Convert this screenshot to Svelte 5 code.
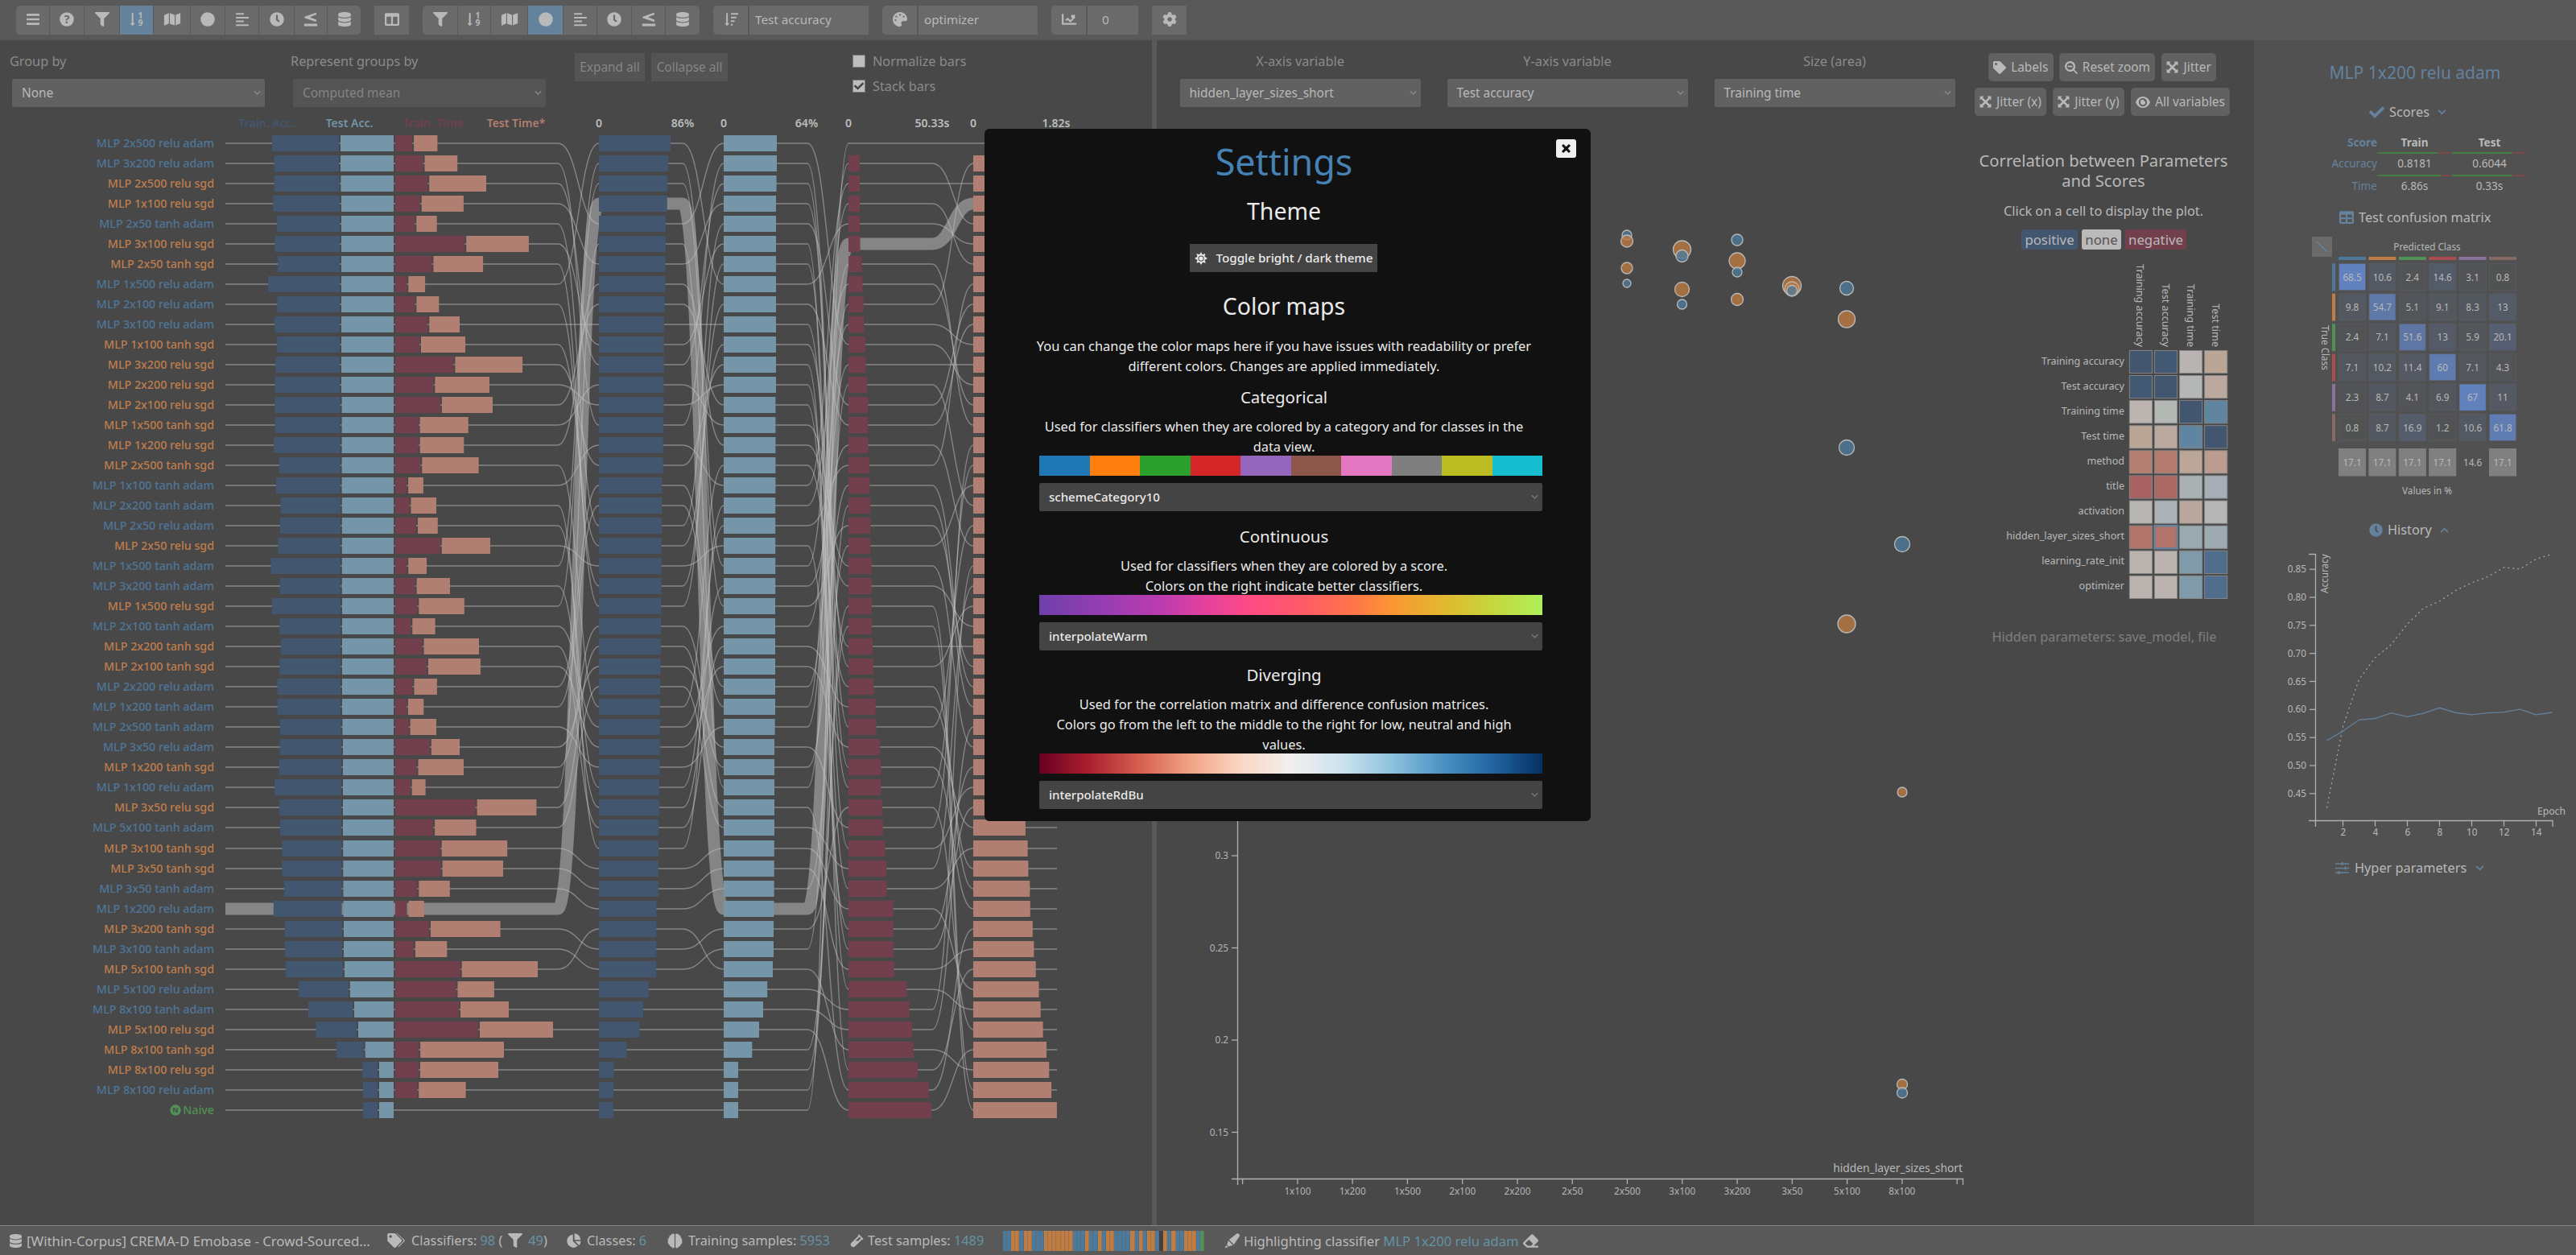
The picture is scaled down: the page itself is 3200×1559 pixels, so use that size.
<script>
  const icons = {
    bars: '<path d="M32 60h448v76H32zM32 218h448v76H32zM32 376h448v76H32z"/>',
    filter: '<path d="M487.976 0H24.028C2.71 0-8.047 25.866 7.058 40.971L192 225.941V432c0 7.831 3.821 15.17 10.237 19.662l80 55.98C298.02 518.69 320 507.493 320 487.98V225.941l184.947-184.97C520.021 25.896 509.338 0 487.976 0z"/>',
    map: '<path d="M-32 106L138 36V406L-24 474Q-32 476-32 466ZM170 36L342 96V470L170 410ZM374 96L536 32Q544 30 544 40V400L374 470Z"/>',
    circle: '<circle cx="256" cy="256" r="250"/>',
    align: '<path d="M32 36h280v58H32zM32 168h448v58H32zM32 300h280v58H32zM32 432h448v58H32z"/>',
    clock: '<path d="M256,8C119,8,8,119,8,256S119,504,256,504,504,393,504,256,393,8,256,8Zm92.49,313h0l-20,25a16,16,0,0,1-22.49,2.5h0l-67-49.72a40,40,0,0,1-15-31.23V112a16,16,0,0,1,16-16h32a16,16,0,0,1,16,16V256l58,42.5A16,16,0,0,1,348.49,321Z"/>',
    lte: '<path d="M40 160L440 20L466 84L226 180L466 276L440 340L40 210ZM24 412h464v84H24z"/>',
    database: '<g transform="translate(32 0)"><path d="M448 73.143v45.714C448 159.143 347.667 192 224 192S0 159.143 0 118.857V73.143C0 32.857 100.333 0 224 0s224 32.857 224 73.143zM448 176v102.857C448 319.143 347.667 352 224 352S0 319.143 0 278.857V176c48.125 33.143 136.208 48.572 224 48.572S399.874 209.143 448 176zm0 160v102.857C448 479.143 347.667 512 224 512S0 479.143 0 438.857V336c48.125 33.143 136.208 48.572 224 48.572S399.874 369.143 448 336z"/></g>',
    columns: '<path d="M464 32H48C21.49 32 0 53.49 0 80v352c0 26.51 21.49 48 48 48h416c26.51 0 48-21.49 48-48V80c0-26.51-21.49-48-48-48zM224 416H64V160h160v256zm224 0H288V160h160v256z"/>',
    sortAmount: '<path d="M90 32h56v360h60L118 490L30 392h60zM256 32h256v60H256zM256 160h192v60H256zM256 288h128v60H256zM256 416h64v60H256z"/>',
    palette: '<path d="M204.3 5C104.9 24.4 24.8 104.3 5.2 203.4c-37 187 131.7 326.4 258.8 306.7 41.2-6.4 61.4-54.6 42.5-91.7-23.1-45.4 9.9-98.4 60.9-98.4h79.7c35.8 0 64.8-29.6 64.9-65.3C511.5 97.1 368.1-26.9 204.3 5zM96 320c-17.7 0-32-14.3-32-32s14.3-32 32-32 32 14.3 32 32-14.3 32-32 32zm32-128c-17.7 0-32-14.3-32-32s14.3-32 32-32 32 14.3 32 32-14.3 32-32 32zm128-64c-17.7 0-32-14.3-32-32s14.3-32 32-32 32 14.3 32 32-14.3 32-32 32zm128 64c-17.7 0-32-14.3-32-32s14.3-32 32-32 32 14.3 32 32-14.3 32-32 32z"/>',
    chart: '<path d="M0 64h64v320h448v64H0zM128 270L208 190L304 286L372 218L330 176Q324 96 350 96H464V210Q464 236 424 224L410 262L304 370L208 276L164 320Z"/>',
    cog: '<path d="M487.4 315.7l-42.6-24.6c4.3-23.2 4.3-47 0-70.2l42.6-24.6c4.9-2.8 7.1-8.6 5.5-14-11.1-35.6-30-67.8-54.7-94.6-3.8-4.1-10-5.1-14.8-2.3L380.8 110c-17.9-15.4-38.5-27.3-60.8-35.1V25.8c0-5.6-3.9-10.5-9.4-11.7-36.7-8.2-74.3-7.8-109.2 0-5.5 1.2-9.4 6.1-9.4 11.7V75c-22.2 7.9-42.8 19.8-60.8 35.1L88.7 85.5c-4.9-2.8-11-1.9-14.8 2.3-24.7 26.7-43.6 58.9-54.7 94.6-1.7 5.4.6 11.2 5.5 14L67.3 221c-4.3 23.2-4.3 47 0 70.2l-42.6 24.6c-4.9 2.8-7.1 8.6-5.5 14 11.1 35.6 30 67.8 54.7 94.6 3.8 4.1 10 5.1 14.8 2.3l42.6-24.6c17.9 15.4 38.5 27.3 60.8 35.1v49.2c0 5.6 3.9 10.5 9.4 11.7 36.7 8.2 74.3 7.8 109.2 0 5.5-1.2 9.4-6.1 9.4-11.7v-49.2c22.2-7.9 42.8-19.8 60.8-35.1l42.6 24.6c4.9 2.8 11 1.9 14.8-2.3 24.7-26.7 43.6-58.9 54.7-94.6 1.5-5.5-.7-11.3-5.6-14.1zM256 336c-44.1 0-80-35.9-80-80s35.9-80 80-80 80 35.9 80 80-35.9 80-80 80z"/>',
    tag: '<path d="M0 252.118V48C0 21.49 21.49 0 48 0h204.118a48 48 0 0 1 33.941 14.059l211.882 211.882c18.745 18.745 18.745 49.137 0 67.882L293.823 497.941c-18.745 18.745-49.137 18.745-67.882 0L14.059 286.059A48 48 0 0 1 0 252.118zM112 64c-26.51 0-48 21.49-48 48s21.49 48 48 48 48-21.49 48-48-21.49-48-48-48z"/>',
    tags: '<path transform="translate(-50 0)" d="M0 252.118V48C0 21.49 21.49 0 48 0h204.118a48 48 0 0 1 33.941 14.059l211.882 211.882c18.745 18.745 18.745 49.137 0 67.882L293.823 497.941c-18.745 18.745-49.137 18.745-67.882 0L14.059 286.059A48 48 0 0 1 0 252.118zM112 64c-26.51 0-48 21.49-48 48s21.49 48 48 48 48-21.49 48-48-21.49-48-48-48z"/><path d="M290 0L546 226Q580 260 546 294L350 490L330 470L500 300Q536 260 500 220L268 0Z"/>',
    searchMinus: '<path d="M208 0a208 208 0 1 0 128 372L464 500Q480 516 500 496Q516 480 500 464L372 336A208 208 0 0 0 208 0zM208 72a136 136 0 1 1 0 272a136 136 0 0 1 0-272z" fill-rule="evenodd"/><path d="M120 178h176v60H120z"/>',
    expand: '<path d="M20 20H190L138 74L256 192L374 74L322 20H492V190L438 138L320 256L438 374L492 322V492H322L374 438L256 320L138 438L190 492H20V322L74 374L192 256L74 138L20 190Z"/>',
    eye: '<path fill-rule="evenodd" d="M256 56C140 56 50 130 0 256C50 382 140 456 256 456S462 382 512 256C462 130 372 56 256 56zM256 110a146 146 0 1 1 0 292a146 146 0 0 1 0-292zM256 166a90 90 0 1 0 90 90a90 90 0 0 0-6-34a44 44 0 0 1-52-50a90 90 0 0 0-32-6z"/>',
    check: '<path d="M173.898 439.404l-166.4-166.4c-9.997-9.997-9.997-26.206 0-36.204l36.203-36.204c9.997-9.998 26.207-9.998 36.204 0L192 312.69 432.095 72.596c9.997-9.997 26.207-9.997 36.204 0l36.203 36.204c9.997 9.997 9.997 26.206 0 36.204l-294.4 294.401c-9.998 9.997-26.207 9.997-36.204-.001z"/>',
    table: '<path d="M464 32H48C21.49 32 0 53.49 0 80v352c0 26.51 21.49 48 48 48h416c26.51 0 48-21.49 48-48V80c0-26.51-21.49-48-48-48zM224 416H64v-96h160v96zm0-160H64v-96h160v96zm224 160H288v-96h160v96zm0-160H288v-96h160v96z"/>',
    down: '<path d="M60 180L110 130L256 276L402 130L452 180L256 376Z"/>',
    up: '<path d="M60 332L110 382L256 236L402 382L452 332L256 136Z"/>',
    pie: '<path d="M220 40V280L390 450A232 232 0 1 1 220 40zM276 10A224 224 0 0 1 490 236H276zM290 280H500A220 220 0 0 1 436 430Z"/>',
    brain: '<path d="M232 20Q150-10 120 60Q50 80 60 150Q0 190 20 260Q0 340 60 370Q70 450 140 460Q190 530 240 480V40ZM280 20Q362-10 392 60Q462 80 452 150Q512 190 492 260Q512 340 452 370Q442 450 372 460Q322 530 272 480V40Z"/>',
    vial: '<path fill-rule="evenodd" d="M330 10L500 180L462 216L446 202L180 468Q120 520 52 460Q-10 390 44 332L312 66L294 46ZM350 104L200 254H310L406 158Z"/>',
    highlighter: '<path d="M0 480L70 408L120 460L100 480ZM100 350L130 240L290 400L170 430L150 450L80 380ZM156 216L420 10Q450-10 480 24L504 50Q524 76 504 104L318 376Z"/>',
    eraser: '<path d="M497.941 273.941c18.745-18.745 18.745-49.137 0-67.882l-160-160c-18.745-18.745-49.136-18.746-67.883 0l-256 256c-18.745 18.745-18.745 49.137 0 67.882l96 96A48.004 48.004 0 0 0 144 480h356c6.627 0 12-5.373 12-12v-40c0-6.627-5.373-12-12-12H355.883l142.058-142.059zm-302.627-62.627l137.373 137.373L265.373 416H150.628l-80-80 124.686-124.686z"/>',
    sliders: '<path d="M0 70h512v44H0zM0 234h512v44H0zM0 398h512v44H0zM230 30h54v124h-54zM350 194h54v124h-54zM110 358h54v124h-54z"/>',
    times: '<path d="M120 40L256 166L392 40L472 120L346 256L472 392L392 472L256 346L120 472L40 392L166 256L40 120Z"/>',
    sun: '<path fill-rule="evenodd" d="M256 0L306 104L426 62L398 184L512 256L398 320L440 440L320 404L256 512L194 404L72 440L112 320L0 256L112 184L72 66L194 104ZM256 140a116 116 0 1 0 0 232a116 116 0 0 0 0-232z"/><circle cx="256" cy="256" r="84"/>'
  };

  const toolbar = [
    [['bars', 41], ['question', 42], ['filter', 43], ['sort', 41, true], ['map', 45], ['circle', 42], ['align', 41], ['clock', 43], ['lte', 40], ['database', 41]],
    [['columns', 43]],
    [['filter', 43], ['sort', 40], ['map', 45], ['circle', 43, true], ['align', 41], ['clock', 42], ['lte', 41], ['database', 42]]
  ];
  const fields = [
    ['sortAmount', 'Test accuracy', 148, 43],
    ['palette', 'optimizer', 148, 43],
    ['chart', '0', 63, 43]
  ];

  // label, train bar left, test bar left, train time right, test time right
  const raw = [
    ['2x500 relu adam', 338, 423, 512.1, 543.4],
    ['3x200 relu adam', 340.6, 423, 525.5, 568.2],
    ['2x500 relu sgd', 340.6, 423.4, 531.2, 604],
    ['1x100 relu sgd', 339.3, 424, 521.7, 575.9],
    ['2x50 tanh adam', 343.8, 424, 515.3, 542.7],
    ['3x100 relu sgd', 341.2, 424, 577.2, 656.9],
    ['2x50 tanh sgd', 345, 424, 536.4, 600.1],
    ['1x500 relu adam', 333, 424, 505.3, 528.1],
    ['2x100 relu adam', 344.4, 424, 515.4, 545.3],
    ['3x100 relu adam', 341.1, 424, 531.3, 571],
    ['1x100 tanh sgd', 344.2, 424, 521, 578.1],
    ['3x200 relu sgd', 342.4, 424, 563.4, 649.1],
    ['2x200 relu sgd', 341.5, 424, 538.4, 608],
    ['2x100 relu sgd', 341.1, 424.6, 546.9, 612],
    ['1x500 tanh sgd', 342, 424.6, 519.6, 581.7],
    ['1x200 relu sgd', 340.2, 424.6, 519.7, 576.3],
    ['2x500 tanh sgd', 346.9, 424.6, 522.3, 594.6],
    ['1x100 tanh adam', 342.9, 424.6, 505.1, 525.9],
    ['2x200 tanh adam', 348.7, 424.8, 508.5, 542],
    ['2x50 relu adam', 347.8, 424.8, 517, 543.8],
    ['2x50 relu sgd', 345.1, 424.8, 546.8, 609],
    ['1x500 tanh adam', 336.6, 424.8, 505.2, 530],
    ['3x200 tanh adam', 347.8, 424.8, 515.6, 559],
    ['1x500 relu sgd', 338, 425, 518.3, 576.8],
    ['2x100 tanh adam', 347.3, 425, 510.3, 540.6],
    ['2x200 tanh sgd', 348.7, 425, 524.6, 595],
    ['2x100 tanh sgd', 347.3, 425, 530, 596.9],
    ['2x200 relu adam', 344.6, 425, 512.5, 542.9],
    ['1x200 tanh adam', 344.7, 425, 504.9, 526.3],
    ['2x500 tanh adam', 347.8, 425.4, 507.6, 542],
    ['3x50 relu adam', 347.5, 426, 533.8, 571],
    ['1x200 tanh sgd', 347, 426, 517.5, 576],
    ['1x100 relu adam', 341, 426, 509.7, 528.6],
    ['3x50 relu sgd', 347.1, 426, 590.6, 666.4],
    ['5x100 tanh adam', 347.8, 426, 538.1, 591.5],
    ['3x100 tanh sgd', 350.4, 426.2, 546.7, 630.2],
    ['3x50 tanh sgd', 350.5, 426.3, 547.6, 625],
    ['3x50 tanh adam', 353, 426.4, 518.3, 558.8],
    ['1x200 relu adam', 339.8, 426.6, 505.5, 526.8],
    ['3x200 tanh sgd', 353.8, 427, 533, 621.6],
    ['3x100 tanh adam', 353.9, 427, 514, 555.3],
    ['5x100 tanh sgd', 354.7, 428, 571.7, 668],
    ['5x100 relu adam', 371, 434.8, 566.5, 613.9],
    ['8x100 tanh adam', 383, 440, 570, 632],
    ['5x100 relu sgd', 392.6, 445, 594, 687],
    ['8x100 tanh sgd', 417.6, 453.7, 520.1, 626],
    ['8x100 relu sgd', 450.3, 471, 519.9, 619],
    ['8x100 relu adam', 451, 471, 518.2, 578.6],
    ['Naive', 451, 471, 491, 493]
  ];
  const rowY = (i) => 178 + 25 * i + (i > 34 ? 1 : 0);
  const rows = raw.map(([label, trainLeft, testLeft, timeRight, testTimeRight], i) => ({
    i,
    label,
    kind: label === 'Naive' ? 'naive' : label.endsWith('sgd') ? 'sgd' : 'adam',
    v: [testLeft - 2 - trainLeft, 489 - testLeft, timeRight - 491, testTimeRight - timeRight - 2],
    trainLeft,
    testLeft,
    timeRight
  }));
  const rank = (k, dir) => {
    const out = [];
    [...rows].sort((a, b) => dir * (a.v[k] - b.v[k]) || a.i - b.i).forEach((r, p) => (out[r.i] = p));
    return out;
  };
  const ranks = [rank(0, -1), rows.map((r) => r.i), rank(2, 1), rank(3, 1)];
  const cols = [744, 899, 1054, 1209];
  const colClass = ['c-train', 'c-test', 'c-ttime', 'c-stime'];
  const linkPath = (i) => {
    let d = `M280 ${rowY(i)}H693`;
    let x = 693;
    let y = rowY(i);
    cols.forEach((cx, k) => {
      const ny = rowY(ranks[k][i]);
      const m = (x + cx) / 2;
      d += `C${m} ${y} ${m} ${ny} ${cx} ${ny}H${cx + 104}`;
      x = cx + 104;
      y = ny;
    });
    return d;
  };
  const heads = [
    ['Train. Acc.', 331, 'h-train'], ['Test Acc.', 434, 'h-test'], ['Train. Time', 538, 'h-ttime'], ['Test Time*', 641, 'h-stime'],
    ['0', 744, ''], ['86%', 848, ''], ['0', 899, ''], ['64%', 1002, ''], ['0', 1054, ''], ['50.33s', 1158, ''], ['0', 1209, ''], ['1.82s', 1312, '']
  ];

  const dots = [
    [2021, 292, 6, 'b'], [2021, 299.5, 7.5, 'o'], [2021, 333, 7, 'o'], [2021, 352, 5, 'b'],
    [2089.5, 310, 11, 'o'], [2089.5, 318, 7.5, 'b'], [2089.5, 359.5, 9, 'o'], [2089.5, 378, 6, 'b'],
    [2158, 298, 7, 'b'], [2158, 324, 10, 'o'], [2158, 338, 6, 'b'], [2158, 372, 7.5, 'o'],
    [2226, 355, 11.5, 'o'], [2226, 359, 9, 'o'], [2226, 361, 6.5, 'b'],
    [2294, 358, 8.5, 'b'], [2294, 396.5, 10.5, 'o'], [2294, 556, 9.5, 'b'], [2363, 676, 9.5, 'b'],
    [2294, 775, 11, 'o'], [2363, 984, 6, 'o'], [2363, 1347, 6.5, 'o'], [2363, 1357.5, 6.5, 'b']
  ];
  const xTicks = ['', '1x100', '1x200', '1x500', '2x100', '2x200', '2x50', '2x500', '3x100', '3x200', '3x50', '5x100', '8x100', ''];
  const yTicks = [['0.3', 1063], ['0.25', 1177.5], ['0.2', 1292], ['0.15', 1406.5]];

  const corrCols = [['Training accuracy', 2658], ['Test accuracy', 2690], ['Training time', 2720.5], ['Test time', 2752]];
  const corr = [
    ['Training accuracy', '#435670', '#435873', '#b9b4b1', '#bba696'],
    ['Test accuracy', '#435873', '#435670', '#b4b7b5', '#bba9a0'],
    ['Training time', '#bbb4b0', '#b4b8b5', '#42566f', '#5f85a0'],
    ['Test time', '#bba696', '#bba9a0', '#5f85a0', '#42566f'],
    ['method', '#b58071', '#b37c6e', '#bba698', '#bb9c8f'],
    ['title', '#a96262', '#ab6864', '#aab1b3', '#a7aeb7'],
    ['activation', '#b8b6b3', '#acb2b7', '#bba89d', '#b5b6b8'],
    ['hidden_layer_sizes_short', '#b07468', '#b07468', '#98a9b0', '#9fabb2'],
    ['learning_rate_init', '#bab3af', '#bab3af', '#7f9aa8', '#4f6e8e'],
    ['optimizer', '#bab3af', '#bab3af', '#7f9aa8', '#4f6e8e']
  ];

  const classColors = ['#4d7a9a', '#bf7d43', '#519155', '#a94d50', '#8a729f', '#876a64'];
  const confusion = [
    [68.5, 10.6, 2.4, 14.6, 3.1, 0.8],
    [9.8, 54.7, 5.1, 9.1, 8.3, 13],
    [2.4, 7.1, 51.6, 13, 5.9, 20.1],
    [7.1, 10.2, 11.4, 60, 7.1, 4.3],
    [2.3, 8.7, 4.1, 6.9, 67, 11],
    [0.8, 8.7, 16.9, 1.2, 10.6, 61.8]
  ];
  const share = [17.1, 17.1, 17.1, 17.1, 14.6, 17.1];
  const mix = (v) => {
    const t = Math.min(1, v / 68.5);
    const c = (a, b) => Math.round(a + (b - a) * t);
    return `rgb(${c(81, 97)},${c(81, 130)},${c(81, 190)})`;
  };

  const testCurve = [920, 908.2, 894.3, 892.5, 885.7, 890.4, 886.1, 879.3, 885.4, 887.9, 885.7, 884.6, 881.1, 887.9, 885];
  const trainCurve = [1003.6, 902.9, 843.9, 817.1, 800.7, 775.4, 755.7, 746.8, 733.6, 723.9, 716.4, 705, 706.8, 694.6, 688.2];
  const curve = (a) => a.map((y, i) => `${2890.4 + i * 20},${y}`).join(' ');
  const accTicks = ['0.85', '0.80', '0.75', '0.70', '0.65', '0.60', '0.55', '0.50', '0.45'];

  const category10 = ['#1f77b4', '#ff7f0e', '#2ca02c', '#d62728', '#9467bd', '#8c564b', '#e377c2', '#7f7f7f', '#bcbd22', '#17becf'];
</script>

{#snippet icon(name, size = 18)}
  <svg class="icon" width={size} height={size} viewBox="0 0 512 512" fill="currentColor">
    {#if name === 'question'}
      <circle cx="256" cy="256" r="250" />
      <text class="cut" x="256" y="400" font-size="400" text-anchor="middle">?</text>
    {:else if name === 'sort'}
      <path d="M76 32h56v360h62L104 490L14 392h62z" />
      <text x="384" y="236" font-size="290" text-anchor="middle" font-weight="700">1</text>
      <text x="384" y="490" font-size="290" text-anchor="middle" font-weight="700">9</text>
    {:else}
      {@html icons[name]}
    {/if}
  </svg>
{/snippet}

{#snippet select(text, cls = '')}
  <div class="select {cls}"><span>{text}</span>{@render icon('down', 11)}</div>
{/snippet}

<div class="app">
  <header>
    {#each toolbar as group}
      <div class="group">
        {#each group as [name, w, on]}
          <button class:on style="width:{w}px">{@render icon(name)}</button>
        {/each}
      </div>
    {/each}
    {#each fields as [name, text, w, iw]}
      <div class="group field">
        <button style="width:{iw}px">{@render icon(name)}</button>
        <div class="value" class:num={text === '0'} style="width:{w}px">{text}</div>
      </div>
    {/each}
    <div class="group"><button class="cog">{@render icon('cog')}</button></div>
  </header>

  <main>
    <section class="bars">
      <div class="controls">
        <label class="f1"><span>Group by</span>{@render select('None')}</label>
        <label class="f2"><span>Represent groups by</span>{@render select('Computed mean', 'off')}</label>
        <div class="expand"><button>Expand all</button><button>Collapse all</button></div>
        <div class="checks">
          <div><i></i>Normalize bars</div>
          <div><i class="tick">{@render icon('check', 12)}</i>Stack bars</div>
        </div>
      </div>
      <svg class="chart" width="1431" height="1382" viewBox="0 140 1431 1382">
        {#each heads as [t, x, c]}
          <text class="head {c}" {x} y="158">{t}</text>
        {/each}
        {#each rows as r}
          <path class="link" class:hl={r.i === 38} d={linkPath(r.i)} />
        {/each}
        {#each rows as r}
          {@const y = rowY(r.i)}
          <text class="name {r.kind}" x="266" y={y + 5}>{r.kind === 'naive' ? '' : 'MLP '}{r.label}</text>
          <rect class="c-train" x={r.trainLeft} y={y - 10} width={r.v[0]} height="20" />
          <rect class="c-test" x={r.testLeft} y={y - 10} width={r.v[1]} height="20" />
          {#if r.v[2] > 0}
            <rect class="c-ttime" x="491" y={y - 10} width={r.v[2]} height="20" />
            <rect class="c-stime" x={r.timeRight + 2} y={y - 10} width={r.v[3]} height="20" />
          {/if}
          {#each cols as cx, k}
            <rect class={colClass[k]} x={cx} y={rowY(ranks[k][r.i]) - 10} width={Math.max(0, r.v[k])} height="20" />
          {/each}
        {/each}
        <circle class="nbadge" cx="218" cy="1379" r="6.7" />
        <text class="nletter" x="218" y="1382.3">N</text>
      </svg>
    </section>

    <section class="scatter">
      <div class="plot">
        <div class="axes">
          <label><span>X-axis variable</span>{@render select('hidden_layer_sizes_short')}</label>
          <label><span>Y-axis variable</span>{@render select('Test accuracy')}</label>
          <label><span>Size (area)</span>{@render select('Training time')}</label>
        </div>
        <svg class="chart" width="1013" height="1382" viewBox="1437 140 1013 1382">
          <path class="axis" d="M1530 1464.5H2438.5V1472M1537.5 200V1472" />
          {#each yTicks as [t, y]}
            <path class="axis" d="M1530 {y}H1537" />
            <text class="tk end" x="1526" y={y + 4}>{t}</text>
          {/each}
          {#each xTicks as t, i}
            <path class="axis" d="M{1543.6 + i * 68.27} 1464V1471" />
            <text class="tk mid" x={1543.6 + i * 68.27} y="1484">{t}</text>
          {/each}
          <text class="axname" x="2438" y="1456">hidden_layer_sizes_short</text>
          {#each dots as [x, y, r, c]}
            <circle class="dot {c}" cx={x} cy={y} {r} />
          {/each}
        </svg>
      </div>
      <aside class="corr">
        <div class="btns">
          <button>{@render icon('tag', 16)}Labels</button>
          <button>{@render icon('searchMinus', 16)}Reset zoom</button>
          <button>{@render icon('expand', 15)}Jitter</button>
        </div>
        <div class="btns">
          <button>{@render icon('expand', 15)}Jitter (x)</button>
          <button>{@render icon('expand', 15)}Jitter (y)</button>
          <button>{@render icon('eye', 18)}All variables</button>
        </div>
        <h3>Correlation between Parameters<br />and Scores</h3>
        <p class="hint">Click on a cell to display the plot.</p>
        <div class="legend"><b class="pos">positive</b><b class="none">none</b><b class="neg">negative</b></div>
        <svg class="chart" width="350" height="450" viewBox="2450 310 350 450">
          {#each corrCols as [t, x]}
            <text class="clab" transform="translate({x - 4} 431) rotate(90)" text-anchor="end">{t}</text>
          {/each}
          {#each corr as [label, ...cells], i}
            <text class="clab" x="2639" y={452.5 + i * 31.1} text-anchor="end">{label}</text>
            {#each cells as c, j}
              <rect class="cc" class:sel={i === 7 && j === 1} x={2645.3 + j * 31.1} y={435.4 + i * 31.1} width="28.2" height="28.2" fill={c} />
            {/each}
          {/each}
        </svg>
        <p class="hidden">Hidden parameters: save_model, file</p>
      </aside>
    </section>

    <aside class="details">
      <h2>MLP 1x200 relu adam</h2>
      <h4 class="scores">{@render icon('check', 19)}<span>Scores</span>{@render icon('down', 13)}</h4>
      <div class="table">
        <b class="k">Score</b><b>Train</b><b>Test</b>
        <span class="k">Accuracy</span><span class="v a">0.8181</span><span class="v b">0.6044</span>
        <span class="k">Time</span><span class="v c">6.86s</span><span class="v d">0.33s</span>
      </div>
      <h4 class="cm">{@render icon('table', 18)}<span>Test confusion matrix</span></h4>
      <svg class="chart" width="400" height="332" viewBox="2800 290 400 332">
        <rect x="2872" y="294" width="25" height="25" fill="#6a6a6a" />
        <path d="M2878 300L2891 313" stroke="#64829c" stroke-width="1.6" />
        <text class="sm mid" x="3015" y="311">Predicted Class</text>
        <text class="sm mid" transform="translate(2884 432) rotate(90)">True Class</text>
        {#each classColors as c, i}
          <rect x={2905 + i * 37.4} y="319" width="34" height="4" fill={c} />
          <rect x="2897" y={327.3 + i * 37.4} width="4" height="34" fill={c} />
        {/each}
        {#each confusion as line, i}
          {#each line as v, j}
            <rect class="cell" x={2905.5 + j * 37.4} y={327.5 + i * 37.4} width="33" height="33" fill={mix(v)} />
            <text class="sm mid" x={2922 + j * 37.4} y={348.5 + i * 37.4}>{v}</text>
          {/each}
        {/each}
        {#each share as v, j}
          <rect x={2905 + j * 37.4} y="557" width="34" height="34.5" fill={v > 15 ? '#808080' : '#515151'} />
          <text class="sm mid" x={2922 + j * 37.4} y="578.5">{v}</text>
        {/each}
        <text class="sm mid" x="3015" y="614">Values in %</text>
      </svg>
      <h4 class="hist">{@render icon('clock', 17)}<span>History</span>{@render icon('up', 13)}</h4>
      <svg class="chart" width="400" height="375" viewBox="2800 680 400 375">
        <path class="axis" d="M2868 688.5H2876.5V1027M2868 1019.5H3171V1027" />
        {#each accTicks as t, i}
          <path class="axis" d="M2869 {707.2 + i * 34.83}H2876" />
          <text class="sm end" x="2865" y={711.2 + i * 34.83}>{t}</text>
        {/each}
        {#each [2, 4, 6, 8, 10, 12, 14] as n}
          <path class="axis" d="M{2870.5 + n * 20} 1019.5V1026.5" />
          <text class="sm mid" x={2870.8 + n * 20} y="1038">{n}</text>
        {/each}
        <text class="sm" transform="translate(2892 737) rotate(-90)">Accuracy</text>
        <text class="sm end ep" x="3187" y="1012">Epoch</text>
        <polyline points={curve(trainCurve)} class="train" />
        <polyline points={curve(testCurve)} class="test" />
      </svg>
      <h4 class="hyper">{@render icon('sliders', 17)}<span>Hyper parameters</span>{@render icon('down', 13)}</h4>
    </aside>
  </main>

  <footer>
    <div class="g1">{@render icon('database', 17)}<span>[Within-Corpus] CREMA-D Emobase - Crowd-Sourced...</span></div>
    <div class="g2">{@render icon('tags', 18)}<span>Classifiers: <em>98</em> (</span>{@render icon('filter', 18)}<span><em>49</em>)</span></div>
    <div class="g3">{@render icon('pie', 18)}<span>Classes: <em>6</em></span></div>
    <div class="g4">{@render icon('brain', 19)}<span>Training samples: <em>5953</em></span></div>
    <div class="g5">{@render icon('vial', 17)}<span>Test samples: <em>1489</em></span></div>
    <div class="strip">
      {#each rows as r}<i class={r.i === 38 ? 'dark' : r.kind}></i>{/each}
    </div>
    <div class="g6">{@render icon('highlighter', 19)}<span>Highlighting classifier <em>MLP 1x200 relu adam</em></span>{@render icon('eraser', 19)}</div>
  </footer>

  <div class="modal">
    <button class="close">{@render icon('times', 13)}</button>
    <h1>Settings</h1>
    <h2>Theme</h2>
    <button class="toggle">{@render icon('sun', 16)}Toggle bright / dark theme</button>
    <h2 class="maps">Color maps</h2>
    <p class="intro">You can change the color maps here if you have issues with readability or prefer<br />different colors. Changes are applied immediately.</p>
    <h3>Categorical</h3>
    <p>Used for classifiers when they are colored by a category and for classes in the<br />data view.</p>
    <div class="swatch cat">{#each category10 as c}<i style="background:{c}"></i>{/each}</div>
    {@render select('schemeCategory10')}
    <h3>Continuous</h3>
    <p>Used for classifiers when they are colored by a score.<br />Colors on the right indicate better classifiers.</p>
    <div class="swatch warm"></div>
    {@render select('interpolateWarm')}
    <h3>Diverging</h3>
    <p>Used for the correlation matrix and difference confusion matrices.<br />Colors go from the left to the middle to the right for low, neutral and high<br />values.</p>
    <div class="swatch rdbu"></div>
    {@render select('interpolateRdBu')}
  </div>
</div>

<style>
  :global(body) { background: #484848; overflow: hidden; }
  .app {
    position: relative; display: flex; flex-direction: column; width: 3200px; height: 1559px;
    background: #484848; color: #b9b9b9; font: 16.3px "Noto Sans", "Open Sans", sans-serif; overflow: hidden;
  }
  .app * { box-sizing: border-box; }
  button { border: 0; padding: 0; font: inherit; color: inherit; background: #616161; display: flex; align-items: center; justify-content: center; }
  h1, h2, h3, h4, p { margin: 0; font-weight: 400; }
  .icon, .chart { display: block; flex: none; overflow: visible; }

  header { display: flex; gap: 17px; height: 50px; padding: 7px 20px; background: #595959; }
  .group { display: flex; gap: 1px; height: 36px; }
  .group button { background: #6a6a6a; padding-bottom: 2px; }
  .group button.on { background: #64829c; }
  .group button:first-child { border-radius: 5px 0 0 5px; }
  .group button:last-child:not(:first-child) { border-radius: 0 5px 5px 0; }
  .group button:only-child { border-radius: 0; }
  .group .cog { width: 43px; }
  .field { gap: 2px; }
  .value { background: #6a6a6a; padding-left: 7px; line-height: 35px; font-size: 15.2px; }
  .value.num { padding-left: 18px; }
  .cut { fill: #6a6a6a; font-weight: 700; }

  main { display: flex; height: 1472px; }
  .bars { width: 1437px; border-right: 6px solid #595959; }
  .controls { display: flex; height: 90px; color: #8b8b8b; }
  label { display: block; }
  label > span { display: block; height: 48px; padding-top: 13px; line-height: 26px; }
  .f1 { width: 352px; padding-left: 15px; }
  .f1 > span, .f2 > span { margin-left: -3px; }
  .f2 { width: 362px; padding-left: 12px; }
  .select { display: flex; align-items: center; justify-content: space-between; width: 314px; height: 35px; padding: 0 4px 0 12px; border-radius: 2px; background: #616161; color: #b9b9b9; font-size: 15.4px; }
  .select .icon { color: #8a8a8a; }
  .select.off { background: #545454; color: #858585; }
  .expand { display: flex; gap: 8px; padding-top: 16px; width: 345px; }
  .expand button { height: 35px; width: 87px; background: #545454; color: #858585; font-size: 15.4px; }
  .expand button + button { width: 95px; }
  .checks div { display: flex; align-items: center; gap: 9px; height: 31px; }
  .checks { padding-top: 10.5px; }
  .checks i { width: 16px; height: 16px; background: #bdbdbd; border: 1.5px solid #7a7a7a; color: #444; display: flex; align-items: center; justify-content: center; }

  .head { text-anchor: middle; font-size: 14px; font-weight: 600; fill: #bdbdbd; }
  .h-train { fill: #435670; } .h-test { fill: #7595a8; } .h-ttime { fill: #723f4d; } .h-stime { fill: #b07f71; }
  .name { text-anchor: end; font-size: 14.25px; font-weight: 500; }
  .name.adam { fill: #4f7698; } .name.sgd { fill: #bf7d4c; } .name.naive { fill: #519155; }
  .c-train { fill: #435670; } .c-test { fill: #7595a8; } .c-ttime { fill: #723f4d; } .c-stime { fill: #b07f71; }
  .link { fill: none; stroke: #c2c2c2; stroke-opacity: .5; stroke-width: 1.4; }
  .link.hl { stroke-width: 15; }
  .nbadge { fill: #519155; }
  .nletter { fill: #484848; font-size: 9px; font-weight: 700; text-anchor: middle; }

  .scatter { display: flex; width: 1363px; }
  .plot { width: 1013px; }
  .axes { display: flex; gap: 33px; height: 90px; padding-left: 28.5px; text-align: center; color: #8b8b8b; }
  .axes .select { width: 299px; }
  .axis { stroke: #b0b0b0; stroke-width: 1.3; fill: none; }
  .tk { font-size: 11.7px; fill: #b5b5b5; }
  .mid { text-anchor: middle; } .end { text-anchor: end; }
  .axname { text-anchor: end; font-size: 13.8px; fill: #b9b9b9; }
  .dot { stroke: #b9b9b9; stroke-width: 1.3; fill-opacity: .8; }
  .dot.b { fill: #4d7a9a; } .dot.o { fill: #bd7a40; }

  .corr { width: 350px; text-align: center; padding-top: 16px; }
  .btns { display: flex; gap: 7.5px; justify-content: center; margin-bottom: 8px; padding-right: 27px; }
  .btns button { height: 35px; padding: 0 6.5px; gap: 6px; border-radius: 5px; font-size: 15.4px; }
  .corr h3 { margin-top: 43px; font-size: 20.2px; line-height: 25px; padding-right: 24px; }
  .hint { margin-top: 13px; line-height: 25px; padding-right: 24px; }
  .legend { display: flex; gap: 5px; margin-top: 10px; padding-left: 61px; height: 25px; }
  .legend b { font-weight: 400; line-height: 25px; border-radius: 3px; font-size: 16.8px; }
  .pos { width: 70px; background: #435670; } .none { width: 49px; background: #bbb9ba; color: #555; } .neg { width: 76px; background: #723f4d; }
  .clab { font-size: 12.6px; fill: #b9b9b9; }
  .cc { stroke: #888; stroke-width: .9; }
  .cc.sel { stroke: #64829c; stroke-width: 2.4; }
  .hidden { color: #7f7f7f; margin-top: 19px; line-height: 25px; padding-right: 22px; }

  .details { width: 400px; background: #515151; }
  .details h2 { text-align: center; margin-top: 25px; line-height: 30px; font-size: 21px; color: #64829c; }
  h4 { display: flex; align-items: center; gap: 6px; height: 26px; font-size: 16.3px; }
  h4 .icon { color: #64829c; }
  .scores { margin: 21px 0 0 143px; }
  .scores span, .hist span, .hyper span { margin-right: 3px; }
  .table { display: grid; grid-template-columns: 153px 93px 93px; grid-template-rows: 26px 28px 28px; margin-top: 11px; font-size: 13.6px; line-height: 27px; text-align: center; }
  .table .k { text-align: right; color: #64829c; }
  .v { background: linear-gradient(90deg, #3f8040 81%, #7b4747 81%) top left / 92px 2px no-repeat; }
  .v.c { background-image: linear-gradient(90deg, #3f8040 86%, #7b4747 86%); }
  .cm { margin: 12px 0 7px 106px; }
  .hist { margin: 23px 0 9px 143px; }
  .hyper { margin: 10px 0 0 101px; gap: 7px; }
  .hyper span, .hist span { margin-right: 3px; }
  .sm { font-size: 11.7px; fill: #b9b9b9; }
  .ep { font-size: 12.2px; }
  .cell { stroke: #5a5f6a; stroke-width: 1; stroke-opacity: .6; }
  .train { fill: none; stroke: #a5a5a5; stroke-width: 1.3; stroke-dasharray: 2 4; }
  .test { fill: none; stroke: #64829c; stroke-width: 1.3; }

  footer { display: flex; height: 37px; background: #595959; border-top: 1px solid #858585; padding-left: 11px; }
  footer > div { display: flex; align-items: center; gap: 5px; white-space: nowrap; flex: none; }
  em { font-style: normal; color: #6493a6; }
  .g1 { width: 472px; font-size: 16.8px; } .g2 { width: 221px; } .g3 { width: 125px; } .g4 { width: 227px; } .g5 { width: 190px; }
  footer > .g2, footer > .g3, footer > .g4 { gap: 7px; }
  .g2 > span:first-of-type { margin-left: 3px; }
  .g6 { font-size: 16.6px; }
  footer .strip { width: 250px; height: 25px; gap: 0; margin: 6px 25px 0 0; }
  .strip i { flex: 1; height: 25px; border-right: .6px solid rgba(90, 90, 90, .35); }
  .strip .adam { background: #4d7a9a; } .strip .sgd { background: #bf7d43; } .strip .naive { background: #519155; } .strip .dark { background: #404040; }

  .modal {
    position: absolute; left: 1223px; top: 160px; width: 753px; height: 860px; padding: 11px 60px 0 68px;
    border-radius: 6px; background: #111; color: #eaeaea; text-align: center; font-size: 16.4px; line-height: 25px; white-space: nowrap;
  }
  .modal h1, .modal h2, .modal h3, .modal p { position: relative; left: -8.5px; }
  .close { position: absolute; right: 18px; top: 13px; width: 25px; height: 23px; border-radius: 3px; background: #f0f0f0; color: #111; }
  .modal h1 { font-size: 44.8px; line-height: 60px; height: 61px; color: #4682b4; }
  .modal h2 { font-size: 28.4px; line-height: 60px; }
  .toggle { width: 233px; height: 35px; margin: 11px 0 12px 187px; gap: 11px; background: #444; font-size: 15.2px; font-weight: 500; }
  .intro { margin: 7px 0 14px; }
  .modal h3 { font-size: 20.4px; height: 25px; margin: 0 0 11px; }
  .swatch { width: 625px; height: 25px; margin: -1px 0 9px; position: relative; }
  .cat { display: flex; }
  .cat i { flex: 1; }
  .warm { background: linear-gradient(90deg, #6e40aa, #963db3 12.5%, #bf3caf 25%, #e4419d 33%, #fe4b83 42%, #ff5e63 54%, #ff7847 63%, #fb9633 70%, #e2b72f 80%, #c6d63c 90%, #aff05b); }
  .rdbu { background: linear-gradient(90deg, #67001f, #ac202f 10%, #d56050 20%, #f1a385 30%, #fbd7c4 40%, #f2efee 50%, #cde3ee 60%, #8fc2dd 70%, #4b94c4 80%, #2265a3 90%, #053061); }
  .modal .select { width: 625px; background: #444; color: #eaeaea; margin-bottom: 18.7px; font-weight: 500; font-size: 15px; }
  .modal .select .icon { color: #777; }
</style>
